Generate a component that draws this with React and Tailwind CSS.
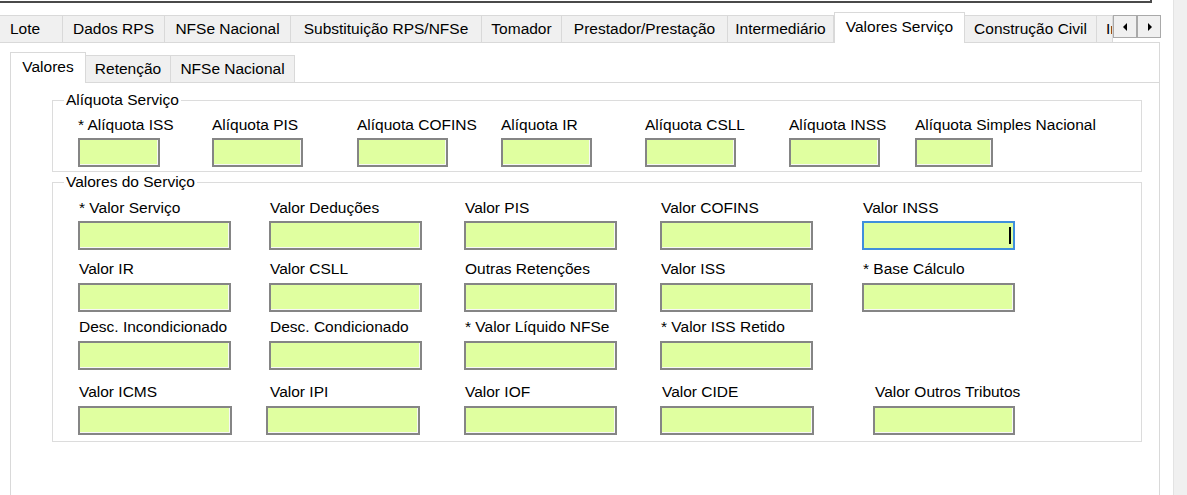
import React from 'react';

// abas de cima
const outerTabs = [
  { label: 'Lote', cls: 'w-[63px] justify-start pl-[10px]' },
  { label: 'Dados RPS', cls: 'w-[102px] justify-center' },
  { label: 'NFSe Nacional', cls: 'w-[126px] justify-center' },
  { label: 'Substituição RPS/NFSe', cls: 'w-[191px] justify-center' },
  { label: 'Tomador', cls: 'w-[80px] justify-center' },
  { label: 'Prestador/Prestação', cls: 'w-[166px] justify-center' },
  { label: 'Intermediário', cls: 'w-[106px] justify-center' },
  { label: 'Valores Serviço', cls: 'w-[131px] justify-center', active: true },
  { label: 'Construção Civil', cls: 'w-[132px] justify-center' },
  { label: 'Informações', cls: 'w-[16px] justify-start pl-[9px] overflow-hidden' },
];

const innerTabs = [
  { label: 'Valores', cls: 'w-[76px] justify-center', active: true },
  { label: 'Retenção', cls: 'w-[85px] justify-center' },
  { label: 'NFSe Nacional', cls: 'w-[124px] justify-center' },
];

const aliquotas = [
  { label: '* Alíquota ISS', col: 'w-[134px]', input: 'w-[82px]' },
  { label: 'Alíquota PIS', col: 'w-[145px]', input: 'w-[91px]' },
  { label: 'Alíquota COFINS', col: 'w-[144px]', input: 'w-[91px]' },
  { label: 'Alíquota IR', col: 'w-[144px]', input: 'w-[91px]' },
  { label: 'Alíquota CSLL', col: 'w-[144px]', input: 'w-[91px]' },
  { label: 'Alíquota INSS', col: 'w-[126px]', input: 'w-[91px]' },
  { label: 'Alíquota Simples Nacional', col: '', input: 'w-[78px]' },
];

const rows = [
  {
    labelTop: 'mt-[8px]',
    inputTop: 'mt-[4px]',
    grid: 'grid-cols-[191px_195px_196px_202px_1fr]',
    fields: [
      { label: '* Valor Serviço' },
      { label: 'Valor Deduções' },
      { label: 'Valor PIS' },
      { label: 'Valor COFINS' },
      { label: 'Valor INSS', focused: true },
    ],
  },
  {
    labelTop: 'mt-[10px]',
    inputTop: 'mt-[5px]',
    grid: 'grid-cols-[191px_195px_196px_202px_1fr]',
    fields: [
      { label: 'Valor IR' },
      { label: 'Valor CSLL' },
      { label: 'Outras Retenções' },
      { label: 'Valor ISS' },
      { label: '* Base Cálculo' },
    ],
  },
  {
    labelTop: 'mt-[6px]',
    inputTop: 'mt-[5px]',
    grid: 'grid-cols-[191px_195px_196px_202px_1fr]',
    fields: [
      { label: 'Desc. Incondicionado' },
      { label: 'Desc. Condicionado' },
      { label: '* Valor Líquido NFSe' },
      { label: '* Valor ISS Retido' },
    ],
  },
  {
    labelTop: 'mt-[13px]',
    inputTop: 'mt-[5px]',
    grid: 'grid-cols-[188px_198px_196px_213px_1fr]',
    fields: [
      { label: 'Valor ICMS', input: 'w-[154px]' },
      { label: 'Valor IPI', input: 'w-[154px]', pad: 'pl-[4px]' },
      { label: 'Valor IOF' },
      { label: 'Valor CIDE', input: 'w-[154px]', pad: 'pl-[2px]' },
      { label: 'Valor Outros Tributos', input: 'w-[142px]', pad: 'pl-[2px]' },
    ],
  },
];

function Tab({ label, cls, active, small }) {
  if (active) {
    return (
      <div className={`relative z-10 -mb-px flex h-[31px] shrink-0 items-center whitespace-nowrap border border-b-0 border-[#d9d9d9] bg-white ${small ? 'pb-[2px]' : 'pb-[3px]'} ${cls}`}>
        {label}
      </div>
    );
  }
  return (
    <div className={`flex h-[27px] shrink-0 items-center whitespace-nowrap border-t border-r border-[#d9d9d9] bg-[#f0f0f0] ${cls}`}>
      {label}
    </div>
  );
}

function TextBox({ w, top, focused }) {
  if (focused) {
    return (
      <div className={`flex h-[29px] ${w} ${top} items-center justify-end border-2 border-[#3f8fdc] bg-[#e0ffa0] pr-[2px]`}>
        <div className="h-[17px] w-[2px] bg-black" />
      </div>
    );
  }
  return (
    <div className={`h-[29px] ${w} ${top} border-2 border-[#858585] bg-[#e0ffa0] shadow-[inset_-1px_-1px_0_#f7f7f7]`} />
  );
}

function ScrollButton({ dir }) {
  return (
    <div className="flex h-[23px] w-[24px] items-center justify-center border border-[#a9a9a9] bg-[#f0f0f0]">
      <svg width="5" height="8" viewBox="0 0 5 8">
        {dir === 'left' ? <path d="M4 0 L0 4 L4 8 Z" fill="#000" /> : <path d="M1 0 L5 4 L1 8 Z" fill="#000" />}
      </svg>
    </div>
  );
}

export default function App() {
  return (
    <div className="flex h-[495px] w-[1187px] overflow-hidden bg-white font-['Liberation_Sans',Arial,sans-serif] text-[15.5px] leading-[18px] text-black">
      <div className="flex w-[1173px] flex-col">
        {/* resto do campo de cima */}
        <div className="h-[3px] w-[1152px] border-b-2 border-r-2 border-[#4a4a4a]" />

        {/* abas principais */}
        <div className="mt-[9px] flex h-[30px] items-end">
          {outerTabs.map((t) => (
            <Tab key={t.label} {...t} />
          ))}
          <div className="mt-[3px] flex self-start">
            <ScrollButton dir="left" />
            <ScrollButton dir="right" />
          </div>
        </div>

        <div className="flex w-[1160px] flex-1 flex-col border-t border-r border-[#d9d9d9]">
          {/* abas internas */}
          <div className="ml-[10px] mt-[9px] flex h-[30px] items-end">
            {innerTabs.map((t) => (
              <Tab key={t.label} {...t} small />
            ))}
          </div>

          <div className="ml-[10px] flex flex-1 flex-col border-t border-l border-[#d9d9d9]">
            <fieldset className="ml-[41px] mt-[8px] w-[1090px] border border-[#dcdcdc] pb-[4px]">
              <legend className="ml-[11px] px-[2px]">Alíquota Serviço</legend>
              <div className="mt-[7px] flex pl-[25px]">
                {aliquotas.map((a) => (
                  <div key={a.label} className={`flex shrink-0 flex-col ${a.col}`}>
                    <span className="whitespace-nowrap">{a.label}</span>
                    <TextBox w={a.input} top="mt-[4px]" />
                  </div>
                ))}
              </div>
            </fieldset>

            <fieldset className="ml-[41px] mt-[1px] w-[1090px] border border-[#dcdcdc] pb-[6px]">
              <legend className="ml-[11px] px-[2px]">Valores do Serviço</legend>
              {rows.map((r, i) => (
                <div key={i} className={`grid ${r.grid} pl-[25px]`}>
                  {r.fields.map((f) => (
                    <div key={f.label} className="flex flex-col">
                      <span className={`whitespace-nowrap ${r.labelTop} ${f.pad || 'pl-[1px]'}`}>{f.label}</span>
                      <TextBox w={f.input || 'w-[153px]'} top={r.inputTop} focused={f.focused} />
                    </div>
                  ))}
                </div>
              ))}
            </fieldset>
          </div>
        </div>
      </div>
      <div className="w-[14px] border-l border-[#e3e3e3] bg-[#f0f0f0]" />
    </div>
  );
}
